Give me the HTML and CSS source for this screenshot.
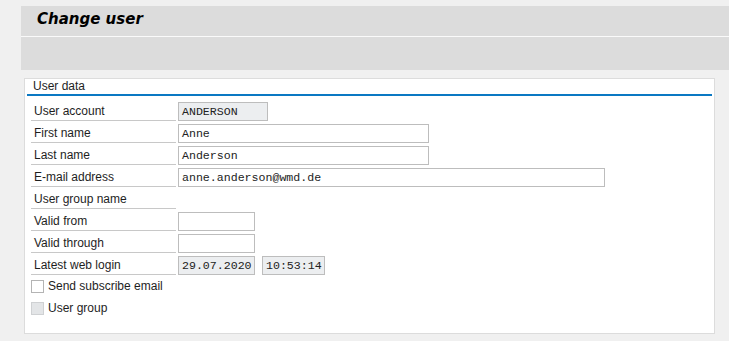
FILE: index.html
```html
<!DOCTYPE html>
<html>
<head>
<meta charset="utf-8">
<link rel="stylesheet" href="styles.css">
</head>
<body>
<div class="header">
  <div class="title-bar"><h1 class="title">Change user</h1></div>
  <div class="toolbar"></div>
</div>
<div class="panel">
  <div class="panel-head">User data</div>
  <div class="form">
    <div class="row"><div class="label">User account</div><div class="field readonly w-acc">ANDERSON</div></div>
    <div class="row"><div class="label">First name</div><div class="field w-name">Anne</div></div>
    <div class="row"><div class="label">Last name</div><div class="field w-name">Anderson</div></div>
    <div class="row"><div class="label">E-mail address</div><div class="field w-mail">anne.anderson@wmd.de</div></div>
    <div class="row"><div class="label">User group name</div></div>
    <div class="row"><div class="label">Valid from</div><div class="field w-date"></div></div>
    <div class="row"><div class="label">Valid through</div><div class="field w-date"></div></div>
    <div class="row"><div class="label">Latest web login</div><div class="field readonly w-date">29.07.2020</div><div class="field readonly w-time">10:53:14</div></div>
    <div class="check-row"><span class="box"></span><span class="check-text">Send subscribe email</span></div>
    <div class="check-row"><span class="box disabled"></span><span class="check-text">User group</span></div>
  </div>
</div>
</body>
</html>
```
FILE: styles.css
```css
html, body {
  margin: 0;
  padding: 0;
}
body {
  background: #f0f0f0;
  width: 729px;
  height: 341px;
  overflow: hidden;
  font-family: "Liberation Sans", Arial, sans-serif;
  font-size: 12px;
  color: #1e1e1e;
}
.header {
  margin: 6px 0 0 21px;
}
.title-bar {
  height: 30px;
  background: #dcdcdc;
  border-bottom: 1px solid #fafafa;
  display: flex;
  align-items: center;
}
.title {
  margin: 0 0 0 16px;
  font-family: "DejaVu Sans", Verdana, sans-serif;
  font-weight: bold;
  font-style: italic;
  font-size: 15px;
  color: #000;
  position: relative;
  top: -2px;
}
.toolbar {
  height: 33px;
  background: #dcdcdc;
}
.panel {
  margin: 8px 14px 0 24px;
  height: 254px;
  background: #fff;
  border: 1px solid #dcdcdc;
}
.panel-head {
  margin: 0 2px;
  padding-left: 6px;
  height: 15px;
  line-height: 15px;
  border-bottom: 2px solid #0a78c3;
  color: #1e1e1e;
}
.form {
  margin: 3px 0 0 6px;
}
.row {
  display: flex;
  height: 22px;
}
.label {
  width: 145px;
  padding: 2px 0 0 3px;
  border-bottom: 1px solid #c8c8c8;
  line-height: 21px;
  box-sizing: border-box;
  height: 22px;
}
.field {
  box-sizing: border-box;
  margin: 3px 0 0 2px;
  height: 19px;
  border: 1px solid #bdbdbd;
  background: #fff;
  font-family: "Liberation Mono", "Courier New", monospace;
  font-size: 11.6px;
  line-height: 17px;
  padding-left: 3px;
  color: #222;
  white-space: nowrap;
}
.field.readonly {
  background: #eceef0;
}
.w-acc { width: 90px; }
.w-name { width: 251px; }
.w-mail { width: 427px; }
.w-date { width: 77px; }
.w-time { width: 63px; margin-left: 7px; }
.check-row {
  display: flex;
  align-items: center;
  height: 22px;
}
.box {
  box-sizing: border-box;
  width: 13px;
  height: 13px;
  border: 1px solid #b4b4b4;
  background: #fff;
  margin-right: 4px;
}
.box.disabled {
  background: #e3e5e7;
  border-color: #cfd1d3;
}
.check-text {
  line-height: 22px;
}
```
